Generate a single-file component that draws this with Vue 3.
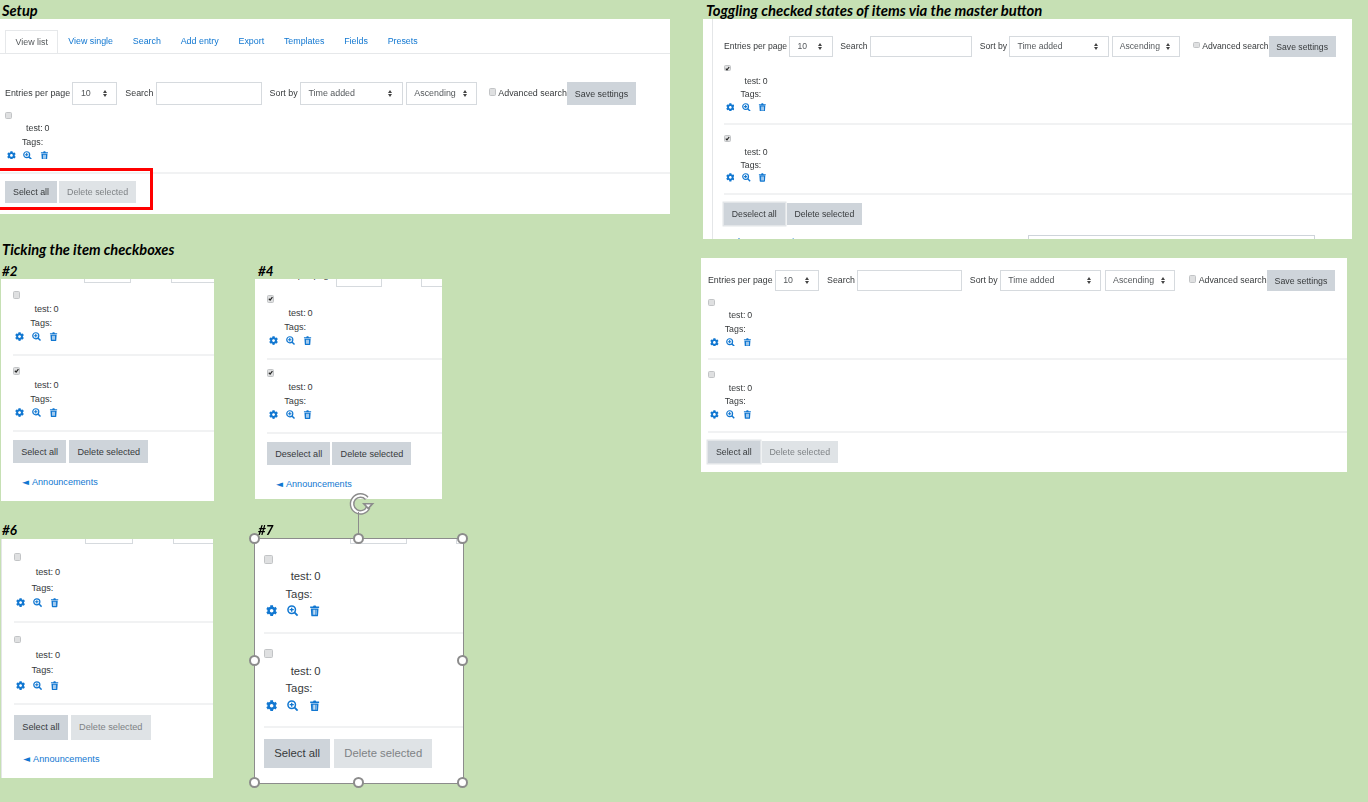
<template>
  <div class="canvas">
    <h2 class="note note-setup">Setup</h2>
    <h2 class="note note-ticking">Ticking the item checkboxes</h2>
    <h2 class="note note-toggling">Toggling checked states of items via the master button</h2>
    <h2 class="note note-num note-2">#2</h2>
    <h2 class="note note-num note-4">#4</h2>
    <h2 class="note note-num note-6">#6</h2>

    <section v-for="shot in shots" :key="shot.id" class="shot" :class="`shot-${shot.id}`">
      <nav v-if="shot.tabs" class="tabs">
        <a v-for="(tab, i) in tabs" :key="tab" class="tab" :class="{ active: i === 0 }">{{ tab }}</a>
      </nav>

      <div class="toolbar">
        <span class="label">Entries per page</span>
        <div class="select per-page">10<i class="carets"></i></div>
        <span class="label search-label">Search</span>
        <div class="search-box"></div>
        <span class="label sort-label">Sort by</span>
        <div class="select sort-by">Time added<i class="carets"></i></div>
        <div class="select order">Ascending<i class="carets"></i></div>
        <span class="box adv-box"></span>
        <span class="label adv-label">Advanced search</span>
        <button class="btn save">Save settings</button>
      </div>

      <div class="items">
        <article v-for="(checked, i) in shot.checks" :key="i" class="item">
          <div class="row">
            <span class="box">
              <svg v-if="checked" viewBox="0 0 10 10"><path d="M1.6 5.2 4 7.8 8.4 2" fill="none" stroke="#222" stroke-width="2.2" /></svg>
            </span>
          </div>
          <div class="row test">test:&thinsp;0</div>
          <div class="row tags">Tags:</div>
          <div class="row icons">
            <svg viewBox="0 0 512 512"><path d="M487.4 315.7l-42.6-24.6c4.3-23.2 4.3-47 0-70.2l42.6-24.6c4.9-2.8 7.1-8.6 5.5-14-11.1-35.6-30-67.8-54.7-94.6-3.8-4.1-10-5.1-14.8-2.3L380.8 110c-17.9-15.4-38.5-27.3-60.8-35.1V25.8c0-5.6-3.9-10.5-9.4-11.7-36.7-8.2-74.3-7.8-109.2 0-5.5 1.2-9.4 6.1-9.4 11.7V75c-22.2 7.9-42.8 19.8-60.8 35.1L88.7 85.5c-4.9-2.8-11-1.9-14.8 2.3-24.7 26.7-43.6 58.9-54.7 94.6-1.7 5.4.6 11.2 5.5 14L67.3 221c-4.3 23.2-4.3 47 0 70.2l-42.6 24.6c-4.9 2.8-7.1 8.6-5.5 14 11.1 35.6 30 67.8 54.7 94.6 3.8 4.1 10 5.1 14.8 2.3l42.6-24.6c17.9 15.4 38.5 27.3 60.8 35.1v49.2c0 5.6 3.9 10.5 9.4 11.7 36.7 8.2 74.3 7.8 109.2 0 5.5-1.2 9.4-6.1 9.4-11.7v-49.2c22.2-7.9 42.8-19.8 60.8-35.1l42.6 24.6c4.9 2.8 11 1.9 14.8-2.3 24.7-26.7 43.6-58.9 54.7-94.6 1.5-5.5-.7-11.3-5.6-14.1zM256 336c-44.1 0-80-35.9-80-80s35.9-80 80-80 80 35.9 80 80-35.9 80-80 80z" /></svg>
            <svg viewBox="0 0 24 24" class="stroked">
              <circle cx="10" cy="10" r="8" stroke-width="3.2" />
              <path d="M15.8 15.8 22.5 22.5" stroke-width="4" />
              <path d="M10 5.6v8.8M5.6 10h8.8" stroke-width="2.8" />
            </svg>
            <svg viewBox="0 0 24 24">
              <path d="M2.5 3.2h6L10 .8h4l1.5 2.4h6v3h-19zM3.8 7.2h16.4l-1 15a2 2 0 0 1-2 1.8H6.8a2 2 0 0 1-2-1.8zM8.2 10v10.6h1.6V10zm3 0v10.6h1.6V10zm3 0v10.6h1.6V10z" fill-rule="evenodd" />
            </svg>
          </div>
        </article>
      </div>

      <div class="actions" :class="{ pressed: shot.pressed }">
        <button class="btn master">{{ shot.master }}</button>
        <button class="btn" :class="{ disabled: !shot.canDelete }">Delete selected</button>
      </div>

      <a v-if="shot.back" class="back"><span class="arrow">◄</span>Announcements</a>

      <div v-if="shot.below" class="below">
        <a class="back">Announcements</a>
        <div class="below-box"></div>
      </div>
    </section>

    <h2 class="note note-num note-7">#7</h2>

    <div class="callout"></div>

    <div class="frame">
      <svg class="rotate" viewBox="0 0 28 24">
        <path d="M19.5 5.5A8.8 8.8 0 1 0 21 15" fill="none" stroke="#8c8c8c" stroke-width="5" />
        <path d="M19.5 5.5A8.8 8.8 0 1 0 21 15" fill="none" stroke="#fff" stroke-width="2" />
        <path d="M14.5 10.5h13l-6.5 7z" fill="#8c8c8c" />
        <path d="M18.4 12h5.2l-2.6 2.8z" fill="#fff" />
      </svg>
      <span class="stem"></span>
      <span v-for="h in handles" :key="h" class="handle" :class="h"></span>
    </div>
  </div>
</template>

<script setup>
const tabs = ['View list', 'View single', 'Search', 'Add entry', 'Export', 'Templates', 'Fields', 'Presets']

const shots = [
  { id: 'setup', tabs: true, checks: [false], master: 'Select all', canDelete: false },
  { id: 'on', checks: [true, true], master: 'Deselect all', canDelete: true, pressed: true, below: true },
  { id: 'off', checks: [false, false], master: 'Select all', canDelete: false, pressed: true },
  { id: 'two', checks: [false, true], master: 'Select all', canDelete: true, back: true },
  { id: 'four', checks: [true, true], master: 'Deselect all', canDelete: true, back: true },
  { id: 'six', checks: [false, false], master: 'Select all', canDelete: false, back: true },
  { id: 'seven', checks: [false, false], master: 'Select all', canDelete: false }
]

const handles = ['tl', 'tm', 'tr', 'ml', 'mr', 'bl', 'bm', 'br']
</script>

<style>
html,
body {
  margin: 0;
  overflow: hidden;
}
</style>

<style scoped>
.canvas {
  position: relative;
  width: 1368px;
  height: 802px;
  overflow: hidden;
  background: #c6e0b4;
  font-family: "Liberation Sans", Arial, sans-serif;
  color: #373a3c;
}

.note {
  position: absolute;
  margin: 0;
  font: italic 700 14.6px/18px Lato, sans-serif;
  color: #000;
  white-space: nowrap;
}
.note-num { font-size: 13.4px; }
.note-setup { left: 2px; top: 1.5px; }
.note-ticking { left: 2px; top: 241px; }
.note-toggling { left: 706px; top: 1px; font-size: 14.85px; }
.note-2 { left: 2px; top: 262px; }
.note-4 { left: 258px; top: 262px; }
.note-6 { left: 2px; top: 521px; }
.note-7 { left: 258px; top: 521px; z-index: 3; }

.shot {
  position: absolute;
  box-sizing: border-box;
  overflow: hidden;
  background: #fff;
  padding-left: var(--x);
  font-size: var(--fs);
  filter: blur(0.3px);
}

.shot-setup {
  left: 0; top: 19px; width: 670px; height: 195px;
  --fs: 8.9px; --x: 5px; --pad: 28px; --ctl: 23px; --first: 3.5px; --row: 13.3px;
  --gap-b: 10px; --gap-t: 0px; --gap-a: 7px; --btn: 22px;
}
.shot-on {
  left: 703px; top: 19px; width: 649px; height: 220px;
  --fs: 8.7px; --tb: 8.6px; --x: 21px; --pad: 17px; --ctl: 21px; --first: 4.5px; --row: 13px;
  --gap-b: 9px; --gap-t: 7.5px; --gap-a: 8px; --btn: 22px;
  --adv: 1.45em;
}
.shot-off {
  left: 701px; top: 258px; width: 646px; height: 214px;
  --fs: 8.8px; --x: 7px; --pad: 12px; --ctl: 21px; --first: 4.5px; --row: 13.3px;
  --gap-b: 9.5px; --gap-t: 8px; --gap-a: 8px; --btn: 22px;
  --adv: 1.6em;
}
.shot-two {
  left: 1px; top: 279px; width: 213px; height: 222px;
  --fs: 9.1px; --tb: 9.3px; --x: 12px; --pad: -20px; --ctl: 24px; --first: 5px; --row: 14px;
  --gap-b: 10px; --gap-t: 8px; --gap-a: 8px; --btn: 23px; --btn-gap: 3px;
}
.shot-four {
  left: 255px; top: 279px; width: 187px; height: 220px;
  --fs: 9.1px; --x: 12px; --pad: -16px; --ctl: 24px; --first: 5px; --row: 14px;
  --gap-b: 9.5px; --gap-t: 6.5px; --gap-a: 8.5px; --btn: 23px;
}
.shot-six {
  left: 1px; top: 539px; width: 212px; height: 239px;
  --fs: 9.2px; --tb: 9.4px; --x: 13px; --pad: -20px; --ctl: 25px; --first: 5.5px; --row: 15.3px;
  --gap-b: 10.5px; --gap-t: 8.5px; --gap-a: 9.5px; --btn: 25px; --btn-gap: 3px;
}
.shot-seven {
  left: 255px; top: 539px; width: 208px; height: 244px;
  --fs: 11.3px; --x: 9px; --pad: -24px; --ctl: 29px; --first: 6.5px; --row: 17.3px;
  --gap-b: 12.5px; --gap-t: 10.5px; --gap-a: 10.5px; --btn: 29px; --btn-gap: 4px;
}

/* thin page rule that was caught in two of the crops */
.shot-on::before,
.shot-six::before {
  content: "";
  position: absolute;
  top: 0;
  bottom: 0;
  width: 1px;
  background: #e4e6e8;
}
.shot-on::before { left: 9px; }
.shot-six::before { left: 0; }

.tabs {
  display: flex;
  height: 23px;
  margin: 11px 0 0 -5px;
  padding-left: 5px;
  border-bottom: 1.5px solid #e6e8ea;
}
.tab {
  padding: 0 9.9px;
  line-height: 22px;
  color: #1177d1;
  white-space: nowrap;
}
.tab.active {
  height: 23px;
  box-sizing: border-box;
  background: #fff;
  border: 1px solid #e6e8ea;
  border-bottom: 0;
  padding: 0 9.5px;
  color: #55595c;
}

.toolbar {
  display: flex;
  align-items: center;
  width: max-content;
  height: var(--ctl);
  margin-top: var(--pad);
  font-size: var(--tb, inherit);
}
.label {
  white-space: nowrap;
  margin-bottom: 1px;
}
.select,
.search-box {
  box-sizing: border-box;
  position: relative;
  height: 100%;
  margin-left: 0.25em;
  border: 1px solid #d6dade;
  color: #55595c;
  line-height: calc(var(--ctl) - 2px);
  white-space: nowrap;
}
.select { padding-left: 0.85em; }
.per-page { width: 5.05em; }
.search-label { margin-left: 0.9em; }
.search-box { width: 11.9em; }
.sort-label { margin-left: 0.9em; }
.sort-by { width: 11.55em; }
.order { width: 8em; margin-left: 0.35em; }
.adv-box { margin-left: var(--adv, 1.3em); margin-bottom: 3px; }
.adv-label { margin-left: 0.3em; }
.save { height: 100%; margin-left: 0.3em; padding: 0 0.85em; }

.carets {
  position: absolute;
  right: 0.95em;
  top: 50%;
  width: 5px;
  height: 7px;
  margin-top: -3.5px;
}
.carets::before,
.carets::after {
  content: "";
  position: absolute;
  left: 0;
  border-left: 2.5px solid transparent;
  border-right: 2.5px solid transparent;
}
.carets::before { top: 0; border-bottom: 3px solid #444; }
.carets::after { bottom: 0; border-top: 3px solid #444; }

.box {
  display: inline-flex;
  flex: none;
  box-sizing: border-box;
  width: 0.8em;
  height: 0.8em;
  background: #dfe0e1;
  border: 1px solid #c2c4c6;
  border-radius: 1.5px;
}
.box svg {
  width: 100%;
  height: 100%;
  overflow: visible;
}

.items { margin-top: var(--first); }
.item {
  padding-bottom: var(--gap-b);
  border-bottom: 2px solid #f1f2f3;
}
.item + .item { padding-top: var(--gap-t); }
.shot-setup .item {
  margin-left: -5px;
  padding-left: 5px;
}

.row {
  display: flex;
  align-items: center;
  height: var(--row);
  white-space: nowrap;
}
.test { padding-left: 2.36em; }
.tags { padding-left: 1.9em; }
.icons {
  gap: 0.87em;
  padding-left: 0.2em;
  color: #1177d1;
}
.icons svg {
  width: 1em;
  height: 1em;
  fill: currentColor;
}
.icons .stroked {
  fill: none;
  stroke: currentColor;
}

.actions {
  display: flex;
  align-items: center;
  gap: var(--btn-gap, 2px);
  margin-top: var(--gap-a);
}
.actions .btn { height: var(--btn); }
.pressed .master {
  box-shadow: 0 0 0 1.5px #e2e5e8;
}

.btn {
  flex: none;
  box-sizing: border-box;
  margin: 0;
  padding: 0 0.9em;
  border: 0;
  background: #ced4da;
  color: #373a3c;
  font: inherit;
  white-space: nowrap;
}
.btn.disabled {
  background: #dfe3e6;
  color: #7e8285;
}

.back {
  display: block;
  margin: 12px 0 0 9px;
  line-height: 14px;
  color: #1177d1;
}
.arrow {
  margin-right: 3px;
  font-family: "DejaVu Sans", sans-serif;
  font-size: 1em;
}

.below {
  display: flex;
  margin-top: 10px;
  height: 12px;
}
.below .back {
  margin: -1px 0 0 12px;
}
.below-box {
  box-sizing: border-box;
  width: 287px;
  height: 20px;
  margin-left: 229px;
  border: 1px solid #ced4da;
}

/* annotations drawn over the crops */
.callout {
  position: absolute;
  left: -3px;
  top: 168px;
  width: 156px;
  height: 42px;
  box-sizing: border-box;
  border: 3px solid #f00;
}

.frame {
  position: absolute;
  left: 254px;
  top: 538px;
  width: 208px;
  height: 244px;
  border: 1px solid #8c8c8c;
  box-sizing: content-box;
}
.handle {
  position: absolute;
  width: 11px;
  height: 11px;
  box-sizing: border-box;
  margin: -6.5px 0 0 -6.5px;
  background: #fff;
  border: 2px solid #8c8c8c;
  border-radius: 50%;
}
.tl, .ml, .bl { left: 0; }
.tm, .bm { left: 50%; }
.tr, .mr, .br { left: 100%; }
.tl, .tm, .tr { top: 0; }
.ml, .mr { top: 50%; }
.bl, .bm, .br { top: 100%; }

.stem {
  position: absolute;
  left: 103px;
  top: -27px;
  width: 1px;
  height: 27px;
  background: #8c8c8c;
}
.rotate {
  position: absolute;
  left: 93px;
  top: -46px;
  width: 27px;
  height: 23px;
}
</style>
